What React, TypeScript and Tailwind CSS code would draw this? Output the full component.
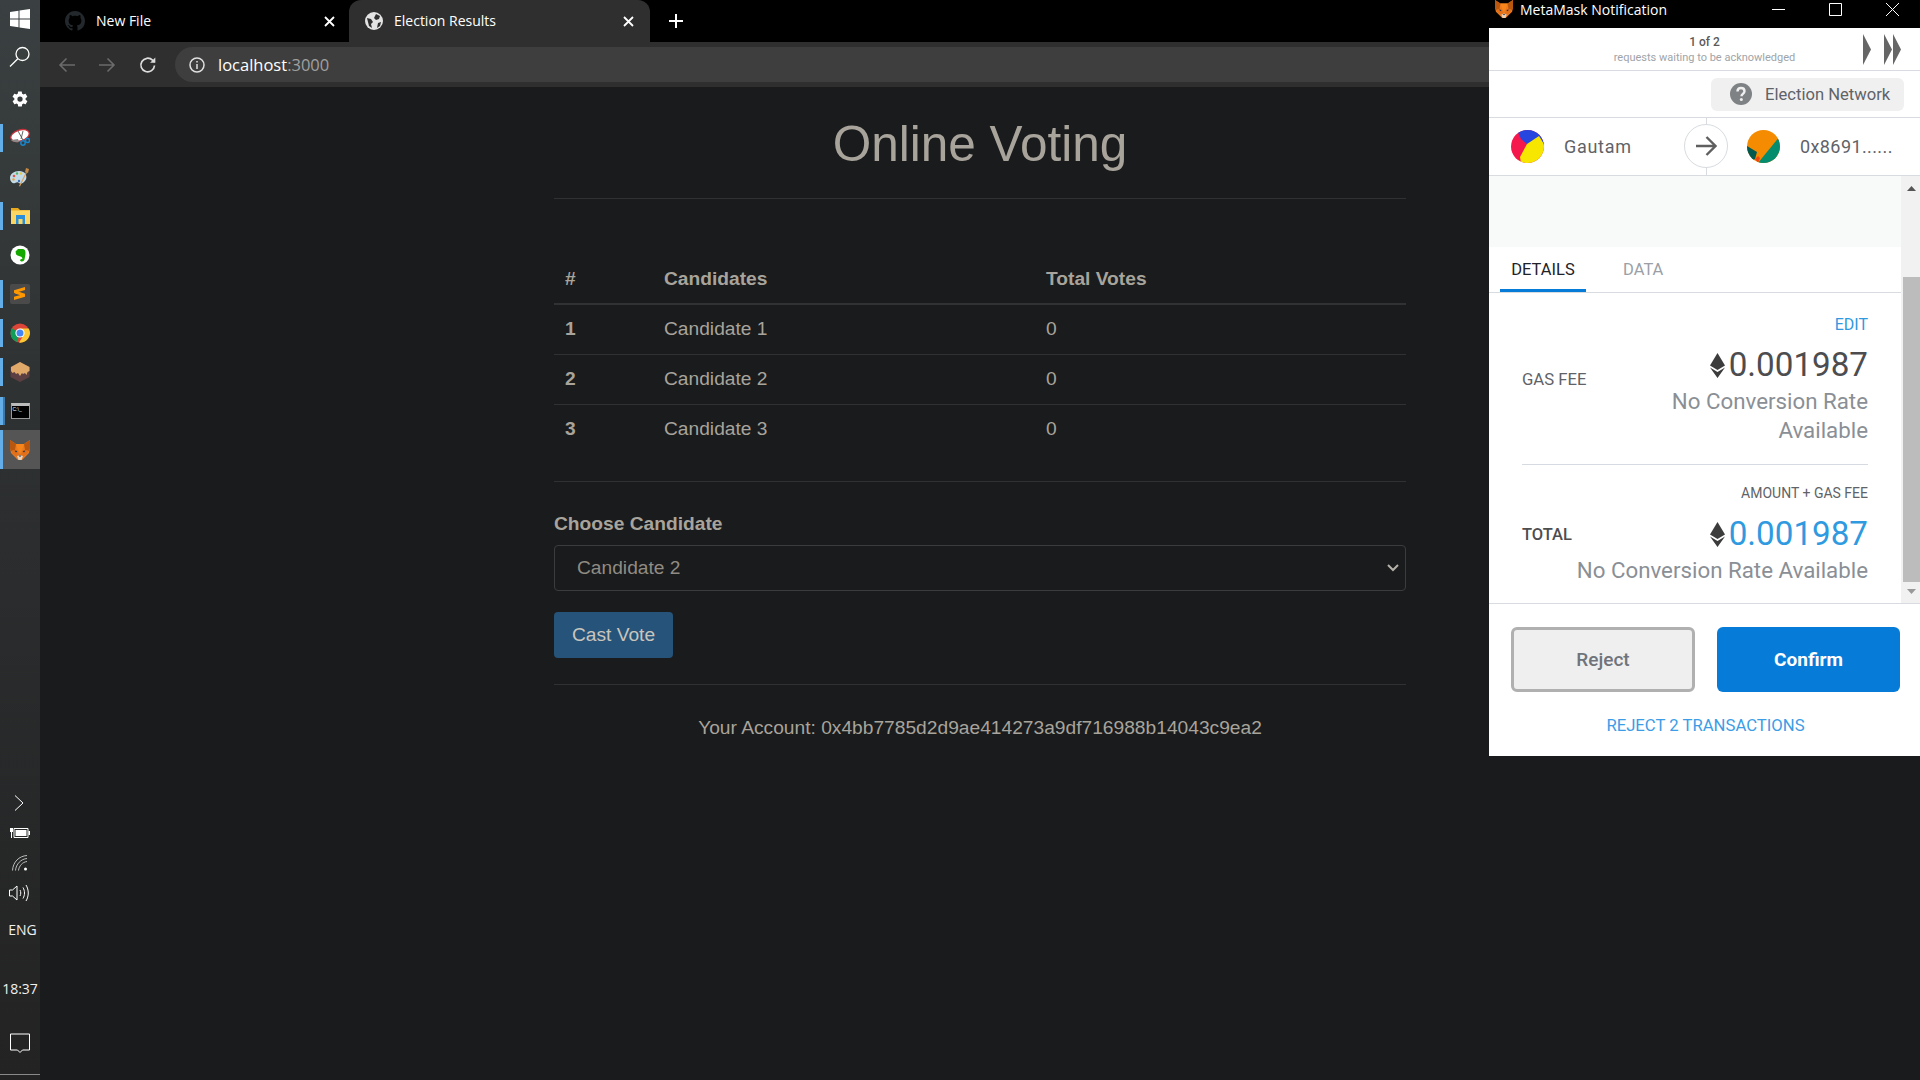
import type { ReactNode } from "react";

const sans = "font-['Liberation_Sans',Arial,sans-serif]";
const roboto = "font-['Roboto',sans-serif]";

const candidates = [
  { id: 1, name: "Candidate 1", votes: 0 },
  { id: 2, name: "Candidate 2", votes: 0 },
  { id: 3, name: "Candidate 3", votes: 0 },
];

function Fox({ size = 20 }: { size?: number }) {
  return (
    <svg width={size} height={size} viewBox="0 0 20 20">
      <path d="M0 0l6 4h8l6-4 0 8-1 5-4 4-3 3H8l-3-3-4-4-1-5z" fill="#ec7a1e" />
      <path d="M0 0l6 4-1 6-4 1-1-3z" fill="#b9570f" />
      <path d="M20 0l-6 4 1 6 4 1 1-3z" fill="#b9570f" />
      <path d="M6 4h8l-2 6-2 3-2-3z" fill="#f6851b" />
      <path d="M1 11l5-1 4 5 4-5 5 1-2 3-7 5-7-5z" fill="#e2701a" />
      <path d="M7 16l3-1 3 1-1.500 4h-3z" fill="#e8d2bc" />
      <path d="M8.500 15.500h3l-1.500 1.500z" fill="#233447" />
      <path d="M4.500 10.500l3 .5-1.500 1.500z" fill="#233447" />
      <path d="M15.500 10.500l-3 .5 1.500 1.500z" fill="#233447" />
    </svg>
  );
}

function EthIcon() {
  return (
    <svg width="15" height="25" viewBox="0 0 15 25" className="shrink-0">
      <path d="M7.500 0L0 12.500l7.500 4.500 7.500-4.500z" fill="#3c3c3d" />
      <path d="M0 14.500l7.500 10.500 7.500-10.500-7.500 4.500z" fill="#3c3c3d" />
    </svg>
  );
}

function DockItem({ bar, active, children }: { bar?: "single" | "double"; active?: boolean; children: ReactNode }) {
  return (
    <div className={`relative flex h-[39px] items-center justify-center ${active ? "bg-[#555555]" : ""}`}>
      {bar && <span className={`absolute left-0 w-[3px] bg-[#63ade8] ${active ? "inset-y-0" : "top-[5.500px] h-[28px]"}`} />}
      {bar === "double" && <span className="absolute left-[3px] top-[5.500px] h-[28px] w-[2px] bg-[#3f78a8]" />}
      {children}
    </div>
  );
}

function Sidebar() {
  return (
    <aside className="flex h-[1080px] w-[40px] shrink-0 flex-col bg-gradient-to-b from-[#3a4041] via-[#2b2d2e] to-[#232323] text-white">
      <div className="flex h-[38px] items-center justify-center">
        <svg width="20" height="20" viewBox="0 0 20 20" fill="#fff">
          <path d="M0 3l8.500-1.200v7.700H0zM9.500 1.600L20 0v9.500H9.500zM0 10.500h8.500v7.700L0 17zM9.500 10.500H20V20L9.500 18.400z" />
        </svg>
      </div>
      <div className="flex h-[38px] items-center justify-center">
        <svg width="22" height="22" viewBox="0 0 22 22" fill="none" stroke="#fff" strokeWidth="1.300">
          <circle cx="13.500" cy="8" r="6.500" />
          <path d="M8.800 12.700L1 20.500" />
        </svg>
      </div>
      <div className="flex h-[42px] items-end justify-center pb-[10px]">
        <svg width="18" height="18" viewBox="0 0 24 24" fill="#fff">
          <path d="M19.400 13c.1-.3.100-.7.100-1s0-.7-.1-1l2.100-1.600c.2-.1.200-.4.100-.6l-2-3.500c-.1-.2-.4-.3-.6-.2l-2.500 1c-.5-.4-1.100-.7-1.700-1l-.4-2.600c0-.3-.2-.5-.5-.5h-4c-.3 0-.5.200-.5.400l-.4 2.700c-.6.200-1.200.6-1.700 1l-2.500-1c-.2-.1-.5 0-.6.200l-2 3.500c-.1.200-.1.500.1.600L4.500 11c0 .3-.1.700-.1 1s0 .7.100 1l-2.100 1.600c-.2.100-.2.400-.1.600l2 3.500c.1.200.4.300.6.200l2.500-1c.5.400 1.100.7 1.700 1l.4 2.600c0 .3.200.5.500.5h4c.3 0 .5-.2.500-.4l.4-2.700c.6-.2 1.200-.6 1.700-1l2.500 1c.2.100.5 0 .6-.2l2-3.500c.1-.2.100-.5-.1-.6zM12 15.500a3.500 3.500 0 1 1 0-7 3.500 3.500 0 0 1 0 7z" />
        </svg>
      </div>
      <DockItem bar="single">
        <svg width="20" height="20" viewBox="0 0 20 20">
          <ellipse cx="10" cy="7.500" rx="9.500" ry="5.500" transform="rotate(-18 10 7.500)" fill="#fff" stroke="#c8323c" strokeWidth="1.300" />
          <path d="M1 12c2 2 5 2.500 8 2l-1-3z" fill="#8a8a8a" />
          <path d="M8 3l5 9M13 3l-2 8" stroke="#555" strokeWidth="0.900" />
          <circle cx="13" cy="15" r="2.200" fill="none" stroke="#1a84c8" strokeWidth="1.500" />
          <circle cx="17.500" cy="12.500" r="2" fill="none" stroke="#1a84c8" strokeWidth="1.500" />
        </svg>
      </DockItem>
      <DockItem>
        <svg width="20" height="20" viewBox="0 0 20 20">
          <path d="M9 4C4 4 0 7 0 11s3 6 5 5 3-1 4 0 3 1 5-1 3-4 2-7-4-4-7-4z" fill="#c3dbe8" />
          <circle cx="4" cy="9" r="1.300" fill="#e2574c" />
          <circle cx="7" cy="6.500" r="1.200" fill="#58b368" />
          <circle cx="3.500" cy="12.500" r="1.200" fill="#e8a33d" />
          <circle cx="11" cy="6.500" r="1.200" fill="#e8c83d" />
          <circle cx="9" cy="14" r="1.200" fill="#3b6fb5" />
          <path d="M9 19L16 5l1 .5L10 19.500z" fill="#d9a05b" />
          <path d="M16 1l3 1-1 4-3-1z" fill="#c48a45" />
        </svg>
      </DockItem>
      <DockItem bar="single">
        <svg width="19" height="16" viewBox="0 0 19 16">
          <path d="M0 0h7l2 2h10v14H0z" fill="#e8a91f" />
          <path d="M0 2.500h19V16H0z" fill="#fbd662" />
          <path d="M5 7h9v9h-2.500v-5h-4v5H5z" fill="#2a8fd8" />
        </svg>
      </DockItem>
      <DockItem>
        <svg width="20" height="20" viewBox="0 0 20 20">
          <circle cx="10" cy="10" r="9.500" fill="#fff" />
          <path d="M5.500 6.500L8 4h4.500c2 0 3 1.500 3 4 0 2.500-.7 4.500-.9 6s-1.100 2.500-2.800 2.500-2.300-1.500-1-2.300 1.700.6 1.400-1.200-2.700-1.500-4.700-2.500-1.500-2.500-2-4z" fill="#14a800" />
        </svg>
      </DockItem>
      <DockItem bar="single">
        <div className="flex h-[20px] w-[20px] items-center justify-center rounded-[2px] bg-[#4a4a4a]">
          <svg width="12" height="13" viewBox="0 0 12 13" fill="#ff9800">
            <path d="M0 3.200L11 0v3L0 6.200zM1 3.600l10 3.200v3L1 6.600zM0 9.800l11-3v3L0 13z" />
          </svg>
        </div>
      </DockItem>
      <DockItem bar="single">
        <svg width="20" height="20" viewBox="0 0 20 20">
          <circle cx="10" cy="10" r="9.500" fill="#db4437" />
          <path d="M10 10L1.800 5.200A9.500 9.500 0 0 0 7 19z" fill="#0f9d58" />
          <path d="M10 5.500h8.700A9.500 9.500 0 0 1 9 19.500L13.800 12z" fill="#fcc934" />
          <circle cx="10" cy="10" r="4.600" fill="#fff" />
          <circle cx="10" cy="10" r="3.500" fill="#4285f4" />
        </svg>
      </DockItem>
      <DockItem bar="single">
        <svg width="20" height="20" viewBox="0 0 20 20">
          <path d="M10 0l9.500 5v10L10 20 .5 15V5z" fill="#5c3f42" />
          <path d="M10 0l9.500 5v4l-2 1-1 3-1.500-2-2 1-1-1-2 3-2-3-2 1-1.500-2-2 1-1.500-2V5z" fill="#e0a96a" />
        </svg>
      </DockItem>
      <DockItem bar="double">
        <div className="h-[16px] w-[19px] border border-[#999999] border-t-[3px] border-t-[#bbbbbb] bg-black">
          <div className={`pl-[1px] text-[5px] leading-[6px] text-white ${sans}`}>C:\_</div>
        </div>
      </DockItem>
      <DockItem bar="single" active>
        <Fox />
      </DockItem>

      <div className="mt-auto flex h-[30px] items-center justify-center pr-[2px]">
        <svg width="10" height="16" viewBox="0 0 10 16" fill="none" stroke="#fff" strokeWidth="1">
          <path d="M1 .5L9 8l-8 7.500" />
        </svg>
      </div>
      <div className="flex h-[30px] items-center justify-center">
        <svg width="20" height="12" viewBox="0 0 20 12" fill="#fff">
          <path d="M4 1.500h14v9H4z" fill="none" stroke="#fff" />
          <path d="M5.500 3h11v6h-11zM18.500 4H20v4h-1.500zM0 1h3v4H0zM1 5h1v6H1z" />
        </svg>
      </div>
      <div className="flex h-[30px] items-center justify-center">
        <svg width="16" height="16" viewBox="0 0 16 16" fill="none" stroke="#bdbdbd" strokeWidth="1">
          <path d="M.5 15.500C1 7 7 1 15 .5M3.500 15.500C4 9 9 4 15 3.500M6.500 15.500C7 11 10.500 7 15 6.500" />
          <circle cx="13.500" cy="14" r="1.500" fill="#fff" stroke="none" />
        </svg>
      </div>
      <div className="flex h-[30px] items-center justify-center pr-[2px]">
        <svg width="21" height="18" viewBox="0 0 21 18" fill="none" stroke="#fff" strokeWidth="1">
          <path d="M.5 6h3L8 2v14l-4.500-4h-3zM11 6c1 2 1 4 0 6M14 3.500c2 3.500 2 7.500 0 11M17 1c3 5 3 11 0 16" />
        </svg>
      </div>
      <div className="flex h-[44px] items-center justify-center pb-[2px] pl-[5px] font-['Open_Sans',sans-serif] text-[14px] text-[#f0f0f0]">ENG</div>
      <div className="flex h-[72px] items-center justify-center font-['Open_Sans',sans-serif] text-[14px] text-[#f0f0f0]">18:37</div>
      <div className="flex h-[38px] items-center justify-center">
        <svg width="20" height="20" viewBox="0 0 20 20" fill="none" stroke="#fff" strokeWidth="1">
          <path d="M.5 1h19v16h-7L10 19.500 7.500 17h-7z" />
        </svg>
      </div>
      <div className="mb-[5px] mt-[12px] h-px bg-[#8a8a8a]" />
    </aside>
  );
}

function Tab({ title, active, icon }: { title: string; active?: boolean; icon: ReactNode }) {
  return (
    <div className={`flex h-[42px] items-center text-[14px] text-white ${active ? "w-[301px] rounded-t-[12px] bg-[#2f2f2f] px-[16px]" : "w-[309px] pl-[25px] pr-[14px]"}`}>
      {icon}
      <span className="flex-1 pb-[2px] pl-[11px]">{title}</span>
      <svg width="11" height="11" viewBox="0 0 11 11" stroke="#fff" strokeWidth="1.800">
        <path d="M1 1l9 9M10 1l-9 9" />
      </svg>
    </div>
  );
}

function BrowserChrome() {
  return (
    <header className="font-['Open_Sans',sans-serif]">
      <div className="flex h-[42px] items-center bg-black">
        <Tab
          title="New File"
          icon={
            <svg width="20" height="20" viewBox="0 0 16 16" fill="#23282c">
              <path d="M8 0C3.580 0 0 3.580 0 8c0 3.540 2.290 6.530 5.470 7.590.4.070.55-.17.550-.38 0-.19-.01-.82-.01-1.490-2.010.37-2.530-.49-2.690-.94-.09-.23-.48-.94-.82-1.130-.28-.15-.68-.52-.01-.53.63-.01 1.080.58 1.230.82.720 1.210 1.870.87 2.330.66.070-.52.280-.87.510-1.070-1.780-.2-3.640-.89-3.640-3.950 0-.87.310-1.590.820-2.150-.08-.2-.36-1.020.08-2.120 0 0 .67-.21 2.200.82.640-.18 1.320-.27 2-.27s1.360.09 2 .27c1.530-1.040 2.200-.82 2.200-.82.440 1.100.160 1.920.080 2.120.51.560.82 1.270.82 2.150 0 3.070-1.870 3.750-3.650 3.950.29.250.54.730.54 1.480 0 1.070-.01 1.930-.01 2.200 0 .21.150.46.550.38A8.010 8.010 0 0 0 16 8c0-4.420-3.580-8-8-8z" />
            </svg>
          }
        />
        <Tab
          active
          title="Election Results"
          icon={
            <svg width="18" height="18" viewBox="0 0 18 18">
              <circle cx="9" cy="9" r="9" fill="#e3e3e3" />
              <path d="M2 6l4 1 2 3-2 2 1 4-3-2-1-4zM11 2l4 2-1 3-3 1-2-2zM13 11l3-1-1 4-3 2z" fill="#2f2f2f" />
            </svg>
          }
        />
        <svg width="16" height="16" viewBox="0 0 16 16" stroke="#fff" strokeWidth="2" className="ml-[18px]">
          <path d="M8 1v14M1 8h14" />
        </svg>
      </div>
      <div className="flex h-[45px] items-center bg-[#2f2f2f] pl-[18px] pr-[8px]">
        <svg width="18" height="16" viewBox="0 0 18 16" fill="none" stroke="#6b6b6b" strokeWidth="1.600">
          <path d="M17 8H2M8.500 1.500L2 8l6.500 6.500" />
        </svg>
        <svg width="18" height="16" viewBox="0 0 18 16" fill="none" stroke="#6b6b6b" strokeWidth="1.600" className="ml-[22px]">
          <path d="M1 8h15M9.500 1.500L16 8l-6.500 6.500" />
        </svg>
        <svg width="18" height="18" viewBox="0 0 18 18" fill="none" stroke="#dddddd" strokeWidth="1.700" className="ml-[23px]">
          <path d="M15.500 9.500a6.800 6.800 0 1 1-2-5.300l2.200 2" />
          <path d="M16.300 1.500v5.200h-5.200" fill="#dddddd" stroke="none" />
        </svg>
        <div className="ml-[18px] flex h-[35px] flex-1 items-center rounded-full bg-[#3e3e3e] pl-[14px]">
          <svg width="16" height="16" viewBox="0 0 16 16" fill="none" stroke="#e0e0e0" strokeWidth="1.500">
            <circle cx="8" cy="8" r="7" />
            <path d="M8 7v5M8 4v1.600" />
          </svg>
          <span className="pl-[13px] pt-[1px] text-[16.500px] text-white">
            localhost<span className="text-[#a0a0a0]">:3000</span>
          </span>
        </div>
      </div>
    </header>
  );
}

function VotingPage() {
  return (
    <main className={`h-[993px] bg-[#1a1b1d] text-[#a8a49b] ${sans}`}>
      <div className="mx-auto w-[852px]">
        <div className="flex h-[112px] items-start justify-center border-b border-[#2f3133] pt-[29px]">
          <h1 className="text-[49.500px] leading-[55px]">Online Voting</h1>
        </div>
        <table className="mt-[56px] w-full table-fixed border-collapse text-left text-[19.200px]">
          <thead>
            <tr className="h-[49px] border-b-2 border-[#303234]">
              <th className="w-[99px] pl-[11px] font-bold">#</th>
              <th className="w-[382px] pl-[11px] font-bold">Candidates</th>
              <th className="pl-[11px] font-bold">Total Votes</th>
            </tr>
          </thead>
          <tbody>
            {candidates.map((c) => (
              <tr key={c.id} className="h-[50px] border-b border-[#2f3133] last:border-b-0">
                <td className="pl-[11px] font-bold">{c.id}</td>
                <td className="pl-[11px]">{c.name}</td>
                <td className="pl-[11px]">{c.votes}</td>
              </tr>
            ))}
          </tbody>
        </table>
        <div className="mt-[27px] border-t border-[#2f3133] pt-[27px]">
          <label className="block text-[19.200px] font-bold leading-[30px]">Choose Candidate</label>
          <div className="relative mt-[6px]">
            <select
              defaultValue="Candidate 2"
              className="block h-[46px] w-full appearance-none rounded-[4px] border border-[#3a3c3e] bg-transparent pl-[22px] text-[19.200px] text-[#908c83]"
            >
              {candidates.map((c) => (
                <option key={c.id}>{c.name}</option>
              ))}
            </select>
            <svg width="12" height="8" viewBox="0 0 12 8" fill="none" stroke="#b5b1a8" strokeWidth="2" className="absolute right-[7px] top-[19px]">
              <path d="M1 1l5 5 5-5" />
            </svg>
          </div>
          <button className="mt-[21px] block h-[46px] w-[119px] rounded-[4px] bg-[#265379] text-[19.200px] text-[#c9c5bd]">Cast Vote</button>
        </div>
        <div className="mt-[26px] border-t border-[#2f3133] pt-[28px] text-center text-[19.200px] leading-[29px]">
          Your Account: 0x4bb7785d2d9ae414273a9df716988b14043c9ea2
        </div>
      </div>
    </main>
  );
}

function Identicon({ kind }: { kind: "a" | "b" }) {
  return (
    <svg width="33" height="33" viewBox="0 0 33 33" className="shrink-0">
      <clipPath id={`clip-${kind}`}>
        <circle cx="16.500" cy="16.500" r="16.500" />
      </clipPath>
      {kind === "a" ? (
        <g clipPath="url(#clip-a)">
          <rect width="33" height="33" fill="#f5184c" />
          <path d="M6 0h27v14l-4 2-3 2-9-3-7-6z" fill="#2746e0" />
          <path d="M16 14l12-8 6 10v17H10l-1-6z" fill="#f7e600" />
        </g>
      ) : (
        <g clipPath="url(#clip-b)">
          <rect width="33" height="33" fill="#f58b00" />
          <path d="M33 6L11 33h22z" fill="#038c6e" />
          <path d="M0 16l10 6-2 7-8 4z" fill="#02594f" />
          <path d="M8 29l3-3 2 2-2 5z" fill="#f2460f" />
        </g>
      )}
    </svg>
  );
}

function MetaMaskWindow() {
  return (
    <section className={`absolute right-0 top-0 flex h-[756px] w-[431px] flex-col bg-white ${roboto}`}>
      <div className="relative flex h-[28px] items-start bg-black pl-[6px] font-['Open_Sans',sans-serif] text-[14px] leading-[20px] text-white">
        <Fox size={18} />
        <span className="pl-[7px]">MetaMask Notification</span>
        <div className="absolute right-[21px] top-[3px] flex items-center gap-[44px]">
          <svg width="13" height="13" viewBox="0 0 13 13" stroke="#fff" strokeWidth="1">
            <path d="M0 6.500h13" />
          </svg>
          <svg width="13" height="13" viewBox="0 0 13 13" fill="none" stroke="#fff" strokeWidth="1">
            <path d="M.5.500h12v12H.5z" />
          </svg>
          <svg width="13" height="13" viewBox="0 0 13 13" stroke="#fff" strokeWidth="1">
            <path d="M0 0l13 13M13 0L0 13" />
          </svg>
        </div>
      </div>
      <div className="relative flex h-[43px] flex-col items-center justify-center border-b border-[#d8dce0] pt-[1px]">
        <span className="text-[12px] font-medium leading-[16px] text-[#5a5a5a]">1 of 2</span>
        <span className="mt-[1px] text-[11px] leading-[14px] text-[#a0a4a8]">requests waiting to be acknowledged</span>
        <div className="absolute right-[19px] top-[6px] flex gap-[13px]">
          <svg width="8" height="31" viewBox="0 0 8 31" fill="#666">
            <path d="M0 0l8 15.500L0 31z" />
          </svg>
          <svg width="17" height="31" viewBox="0 0 17 31" fill="#666">
            <path d="M0 0l8 15.500L0 31zM9 0l8 15.500L9 31z" />
          </svg>
        </div>
      </div>
      <div className="flex h-[47px] items-center justify-end border-b border-[#d8dce0] pr-[16px]">
        <div className="flex h-[33px] w-[193px] items-center rounded-[6px] bg-[#f0f0f0] pl-[19px] text-[16.600px] text-[#5f6368]">
          <svg width="22" height="22" viewBox="0 0 22 22" className="shrink-0">
            <circle cx="11" cy="11" r="11" fill="#7f8285" />
            <path d="M7.500 8.500C7.500 6.500 9 5 11 5s3.500 1.300 3.500 3.200c0 2.600-3 2.600-3 5" fill="none" stroke="#f0f0f0" strokeWidth="2.400" />
            <circle cx="11.300" cy="16.500" r="1.500" fill="#f0f0f0" />
          </svg>
          <span className="pl-[13px] pt-[3px]">Election Network</span>
        </div>
      </div>
      <div className="relative flex h-[58px] items-center border-b border-[#d8dce0] pl-[22px] text-[18px] text-[#5f6368]">
        <Identicon kind="a" />
        <span className="w-[203px] pl-[20px] tracking-[0.7px]">Gautam</span>
        <Identicon kind="b" />
        <span className="pl-[20px] tracking-[0.4px]">0x8691......</span>
        <div className="absolute left-[217px] top-0 h-full w-px bg-[#d8dce0]" />
        <div className="absolute left-[195px] top-[6px] flex h-[44px] w-[44px] items-center justify-center rounded-full border border-[#d8dce0] bg-white">
          <svg width="21" height="20" viewBox="0 0 21 20" fill="none" stroke="#5f5f5f" strokeWidth="2.400">
            <path d="M0 10h19M10.500 1l9 9-9 9" />
          </svg>
        </div>
      </div>
      <div className="relative flex h-[428px] border-b border-[#d8dce0]">
        <div className="flex-1">
          <div className="h-[71px] bg-[#f8f9f9]" />
          <div className="flex h-[46px] items-end gap-[37px] border-b border-[#d8dce0] pl-[11px] text-[16.500px]">
            <div className="flex h-[46px] w-[86px] items-center justify-center border-b-[3px] border-[#067cd8] pt-[5px] text-[#1f2329]">DETAILS</div>
            <div className="flex h-[46px] items-center pt-[3px] text-[#9aa0a6]">DATA</div>
          </div>
          <div className="px-[33px]">
            <div className="flex h-[172px] flex-col border-b border-[#d5dbe0]">
              <div className="pt-[22px] text-right text-[16px] leading-[20px] text-[#2f9ae0]">EDIT</div>
              <div className="flex flex-1 justify-between">
                <span className="pt-[35px] text-[16.700px] leading-[20px] text-[#5f6368]">GAS FEE</span>
                <div className="flex w-[210px] flex-col items-end pt-[9px]">
                  <div className="flex items-center gap-[4px] text-[33.200px] leading-[42px] text-[#4d4d4f]">
                    <EthIcon />
                    0.001987
                  </div>
                  <div className="pt-[1px] text-right text-[22.300px] leading-[29px] text-[#8a8f96]">No Conversion Rate Available</div>
                </div>
              </div>
            </div>
            <div className="pt-[19px] text-right text-[14px] leading-[18px] text-[#5f6368]">AMOUNT + GAS FEE</div>
            <div className="flex items-start justify-between pt-[11px]">
              <span className="pt-[12px] text-[16.500px] font-medium leading-[20px] text-[#4d4d4f]">TOTAL</span>
              <div className="flex flex-col items-end">
                <div className="flex items-center gap-[4px] text-[33.200px] leading-[42px] text-[#2f9ae0]">
                  <EthIcon />
                  0.001987
                </div>
                <div className="pt-[1px] text-[22.300px] leading-[29px] text-[#8a8f96]">No Conversion Rate Available</div>
              </div>
            </div>
          </div>
        </div>
        <div className="relative w-[19px] bg-[#f1f1f1]">
          <svg width="9" height="5" viewBox="0 0 9 5" fill="#555" className="absolute left-[6px] top-[10px]">
            <path d="M4.500 0L9 5H0z" />
          </svg>
          <div className="absolute bottom-[21px] left-[2px] right-0 top-[101px] bg-[#bcbcbc]" />
          <svg width="9" height="5" viewBox="0 0 9 5" fill="#999" className="absolute bottom-[9px] left-[6px]">
            <path d="M4.500 5L9 0H0z" />
          </svg>
        </div>
      </div>
      <div className="flex-1 pl-[22px] pr-[20px] pt-[23px]">
        <div className="flex gap-[22px]">
          <button className="h-[65px] w-[184px] rounded-[6px] border-[3px] border-[#b0b0b0] bg-[#efefef] pt-[2px] text-[19px] font-medium text-[#6f747c]">Reject</button>
          <button className="h-[65px] w-[183px] rounded-[6px] bg-[#067cd8] pt-[2px] text-[19px] font-bold text-white">Confirm</button>
        </div>
        <div className="pt-[24px] text-center text-[16.700px] leading-[20px] text-[#3c9de6]">REJECT 2 TRANSACTIONS</div>
      </div>
    </section>
  );
}

export default function App() {
  return (
    <div className="relative flex h-[1080px] w-[1920px] overflow-hidden bg-[#1a1b1d]">
      <Sidebar />
      <div className="flex-1">
        <BrowserChrome />
        <VotingPage />
      </div>
      <MetaMaskWindow />
    </div>
  );
}
